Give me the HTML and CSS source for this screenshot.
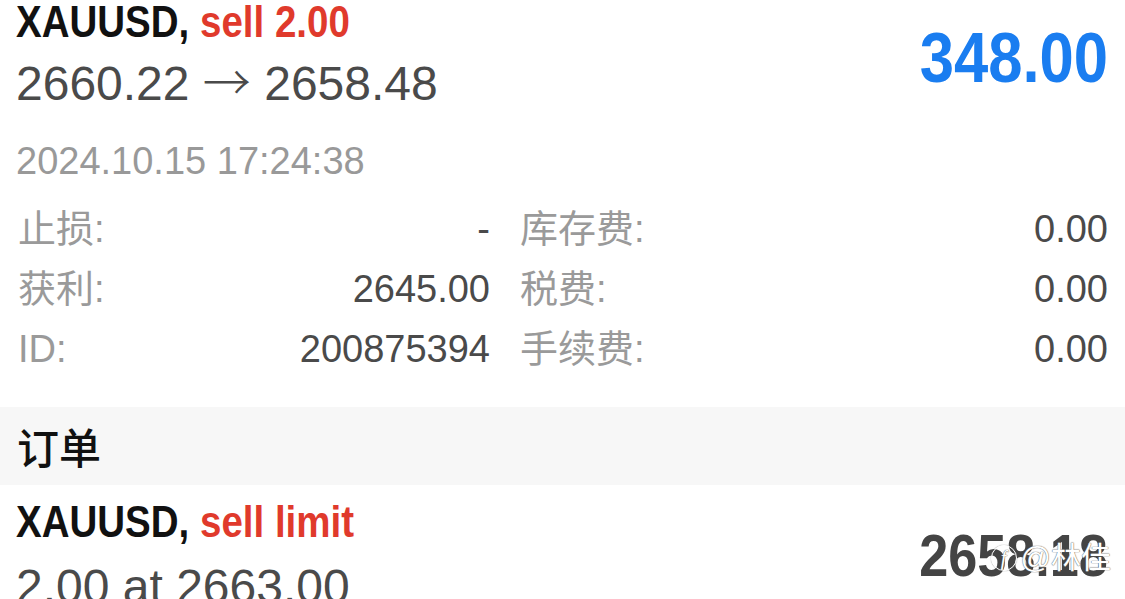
FILE: index.html
```html
<!DOCTYPE html>
<html lang="zh">
<head>
    <meta charset="UTF-8">
    <meta name="viewport" content="width=device-width, initial-scale=1.0">
    <title>交易</title>
    <link rel="stylesheet" href="styles.css">
</head>
<body>
    <section class="trade">
        <div class="trade-head">
            <div class="trade-main">
                <div class="symbol">XAUUSD, <span class="side">sell 2.00</span></div>
                <div class="prices">2660.22 <span class="arrow">→</span> 2658.48</div>
            </div>
            <div class="profit">348.00</div>
        </div>
        <div class="time">2024.10.15 17:24:38</div>
        <div class="details">
            <div class="cell"><span class="label">止损:</span><span class="value">-</span></div>
            <div class="cell"><span class="label">库存费:</span><span class="value">0.00</span></div>
            <div class="cell"><span class="label">获利:</span><span class="value">2645.00</span></div>
            <div class="cell"><span class="label">税费:</span><span class="value">0.00</span></div>
            <div class="cell"><span class="label">ID:</span><span class="value">200875394</span></div>
            <div class="cell"><span class="label">手续费:</span><span class="value">0.00</span></div>
        </div>
    </section>

    <div class="group-title">订单</div>

    <section class="order">
        <div class="trade-main">
            <div class="symbol">XAUUSD, <span class="side">sell limit</span></div>
            <div class="prices order-prices">2.00 at 2663.00</div>
        </div>
        <div class="order-price">2658.18</div>
        <div class="watermark"><span class="wm-logo">f</span>@林佳</div>
    </section>
</body>
</html>
```

FILE: styles.css
```css
body {
    margin: 0;
    background: #fff;
    font-family: "Liberation Sans", "Noto Sans CJK SC", sans-serif;
    color: #4a4a4a;
    overflow: hidden;
}
.trade {
    padding: 0 17px 0 16px;
}
.trade-head {
    display: flex;
    justify-content: space-between;
    align-items: flex-start;
}
/* condensed bold look: no narrow face installed, so squeeze the regular bold */
.symbol {
    font-weight: bold;
    font-size: 44px;
    line-height: 44px;
    color: #111;
    white-space: nowrap;
    transform: scaleX(0.875);
    transform-origin: left center;
}
.side {
    color: #e03a2c;
}
.prices {
    font-size: 48px;
    line-height: 56px;
    margin-top: 12px;
    color: #4a4a4a;
    white-space: nowrap;
}
.arrow {
    font-family: "Noto Sans CJK SC", sans-serif;
    font-weight: 300;
    line-height: 0;
}
.profit {
    font-weight: bold;
    font-size: 70px;
    line-height: 70px;
    margin-top: 23px;
    color: #1a7df0;
    transform: scaleX(0.88);
    transform-origin: right center;
}
.time {
    font-size: 38px;
    line-height: 46px;
    margin-top: 26px;
    color: #999;
}
.details {
    display: grid;
    grid-template-columns: 472px 1fr;
    column-gap: 30px;
    margin-top: 15px;
    padding-left: 2px;
}
.cell {
    display: flex;
    justify-content: space-between;
    font-size: 38px;
    line-height: 60px;
}
.label {
    color: #9a9a9a;
}
.value {
    color: #4a4a4a;
}
.group-title {
    margin-top: 28px;
    height: 78px;
    line-height: 78px;
    padding-left: 17px;
    background: #f7f7f7;
    font-family: "Noto Sans CJK SC", sans-serif;
    font-weight: 500;
    font-size: 42px;
    color: #111;
}
.order {
    position: relative;
    display: flex;
    justify-content: space-between;
    align-items: flex-start;
    padding: 15px 17px 0 16px;
}
.order-prices {
    margin-top: 15px;
}
.order-price {
    font-weight: bold;
    font-size: 60px;
    line-height: 60px;
    margin-top: 26px;
    color: #444;
    transform: scaleX(0.87);
    transform-origin: right center;
}
.watermark {
    position: absolute;
    right: 14px;
    top: 56px;
    display: flex;
    align-items: center;
    gap: 4px;
    white-space: nowrap;
    font-size: 30px;
    line-height: 34px;
    color: #fff;
    text-shadow: 0 0 1px #666, 0 0 1px #666;
}
.wm-logo {
    width: 24px;
    height: 24px;
    border: 1px solid #fff;
    border-radius: 50%;
    box-shadow: 0 0 1px #666;
    font-family: "Liberation Serif", serif;
    font-style: italic;
    font-size: 20px;
    line-height: 24px;
    text-align: center;
}
```
